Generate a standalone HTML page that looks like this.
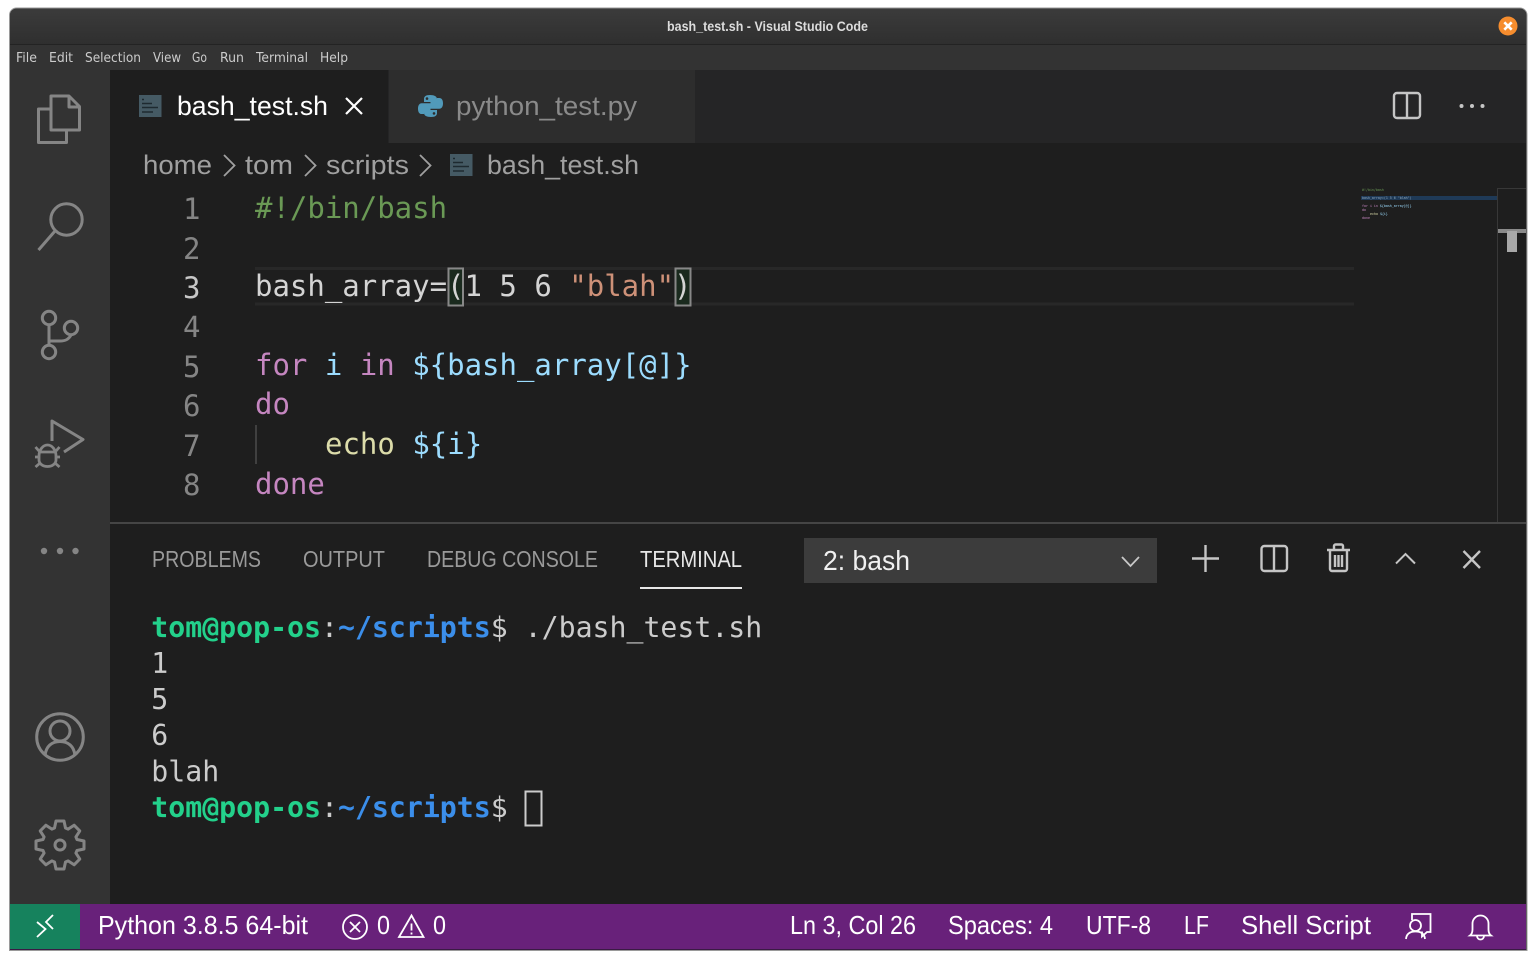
<!DOCTYPE html>
<html><head><meta charset="utf-8"><title>bash_test.sh - Visual Studio Code</title>
<style>
html,body{margin:0;padding:0;background:#fff;width:1536px;height:960px;overflow:hidden}
svg{display:block}
.u{font-family:"Liberation Sans",sans-serif}
.d{font-family:"DejaVu Sans",sans-serif}
.m{font-family:"DejaVu Sans Mono","Liberation Mono",monospace;white-space:pre}
.ic{fill:none;stroke:#858585;stroke-width:3}
.pi{fill:none;stroke:#c5c5c5;stroke-width:2.4}
.wi{fill:none;stroke:#fff;stroke-width:1.8}
</style></head><body>
<svg width="1536" height="960" viewBox="0 0 1536 960" xmlns="http://www.w3.org/2000/svg">
<defs><linearGradient id="t" x1="0" y1="0" x2="0" y2="1"><stop offset="0" stop-color="#3b3b3b"/><stop offset="1" stop-color="#2f2f2f"/></linearGradient></defs>
<rect width="1536" height="960" fill="#fff"/>
<path d="M9.500 950.500V15a7 7 0 0 1 7-7H1520a7 7 0 0 1 7 7V950.500Z" fill="#333" stroke="#9a9a9a" stroke-width="1"/>
<path d="M10 44V15a6 6 0 0 1 6-6H1520a6 6 0 0 1 6 6V44Z" fill="url(#t)"/>
<rect x="10" y="44" width="1516" height="1" fill="#232323"/>
<rect x="10" y="45" width="1516" height="25" fill="#333"/>
<rect x="110" y="70" width="1416" height="834" fill="#1e1e1e"/>
<rect x="388" y="70" width="1138" height="73" fill="#252526"/>
<rect x="389" y="70" width="306" height="73" fill="#2d2d2d"/>

<text class="u" x="667" y="31" font-size="14" font-weight="700" fill="#dcdcdc" textLength="201" lengthAdjust="spacingAndGlyphs">bash_test.sh - Visual Studio Code</text>
<circle cx="1508" cy="26" r="9.500" fill="#f68d2e"/>
<path d="M1504.300 22.300l7.400 7.400m0-7.400l-7.400 7.400" stroke="#fff" stroke-width="2.600"/>

<g class="d" font-size="13" fill="#cccccc">
<text x="16" y="62" textLength="21" lengthAdjust="spacingAndGlyphs">File</text>
<text x="49" y="62" textLength="24" lengthAdjust="spacingAndGlyphs">Edit</text>
<text x="85" y="62" textLength="56" lengthAdjust="spacingAndGlyphs">Selection</text>
<text x="153" y="62" textLength="28" lengthAdjust="spacingAndGlyphs">View</text>
<text x="192" y="62" textLength="15" lengthAdjust="spacingAndGlyphs">Go</text>
<text x="220" y="62" textLength="24" lengthAdjust="spacingAndGlyphs">Run</text>
<text x="256" y="62" textLength="52" lengthAdjust="spacingAndGlyphs">Terminal</text>
<text x="320" y="62" textLength="28" lengthAdjust="spacingAndGlyphs">Help</text>
</g>

<!-- activity bar -->
<g class="ic" stroke-linejoin="round">
<path d="M51 109H38.500v33.500H66.500V130"/>
<path d="M51 96H69L79.500 106.500V130H51Z"/>
<path d="M69 96V107H79.500"/>
<circle cx="66.500" cy="219.500" r="15.700"/>
<path d="M55 231L38.500 250"/>
<circle cx="49" cy="318" r="6.700"/>
<circle cx="71" cy="328" r="6.700"/>
<circle cx="49" cy="352" r="6.700"/>
<path d="M49 325V345M49 341H60C66 341 69 339 71 335"/>
<path d="M52 441V421L83 439.500L64 452"/>
<path d="M39 456a8.500 11 0 0 1 17 0v4a8.500 6.500 0 0 1-17 0zM39 452H56M35.500 447l3.500 4M59.500 447l-3.500 4M35 457H39M56 457H60M35.500 467l4-3.500M59.500 467l-4-3.500" stroke-width="2.800"/>
<circle cx="60" cy="737" r="23.300"/>
<circle cx="60" cy="731" r="10"/>
<path d="M45 755.500C46 746 52 741.500 60 741.500S74 746 75 755.500"/>
<circle cx="60" cy="845" r="5"/>
<path d="M54.500 828L56 821H64L65.500 828L68.100 829.100L74.100 825.200L79.800 830.900L75.900 836.900L77 839.500L84 841V849L77 850.500L75.900 853.100L79.800 859.100L74.100 864.800L68.100 860.900L65.500 862L64 869H56L54.500 862L51.900 860.900L45.900 864.800L40.200 859.100L44.100 853.100L43 850.500L36 849V841L43 839.500L44.100 836.900L40.200 830.900L45.900 825.200L51.900 829.100Z"/>
</g>
<g fill="#858585"><circle cx="44" cy="551" r="3.200"/><circle cx="60" cy="551" r="3.200"/><circle cx="75.500" cy="551" r="3.200"/></g>

<!-- tabs -->
<rect x="139" y="95" width="22.500" height="22" fill="#455a64"/>
<path d="M142 99.500h2M142 103.500h10M142 107.500h16M142 112h11" stroke="#1e2a30" stroke-width="1.400"/>
<text class="u" x="177" y="115" font-size="27" fill="#fff" textLength="151" lengthAdjust="spacingAndGlyphs">bash_test.sh</text>
<path d="M346 98l16 16m0-16l-16 16" stroke="#fff" stroke-width="2.200" fill="none"/>
<g fill="#519aba">
<path d="M430 95c-4.500 0-6 1.700-6 4v3h6.500v1.200h-8.800c-2.300 0-3.700 2-3.700 5.500s1.400 5.300 3.700 5.300h2.300v-3.500c0-2.300 1.700-4 4-4h6c1.700 0 3-1.400 3-3V99c0-2.500-2.500-4-7-4zm-3 2.300a1.300 1.300 0 1 1 0 2.600 1.300 1.300 0 0 1 0-2.600z"/>
<path d="M431 117c4.500 0 6-1.700 6-4v-3h-6.500v-1.200h8.800c2.300 0 3.700-2 3.700-5.500s-1.400-5.300-3.700-5.300H437v3.500c0 2.300-1.700 4-4 4h-6c-1.700 0-3 1.400-3 3v4.500c0 2.500 2.500 4 7 4zm3-2.300a1.300 1.300 0 1 1 0-2.600 1.300 1.300 0 0 1 0 2.600z"/>
</g>
<text class="u" x="456" y="115" font-size="27" fill="#8a8a8a" textLength="181" lengthAdjust="spacingAndGlyphs">python_test.py</text>
<rect x="1394" y="93" width="26" height="25" rx="3" class="pi"/><path d="M1407 93v25" class="pi"/>
<g fill="#c5c5c5"><circle cx="1461.500" cy="106" r="2"/><circle cx="1472" cy="106" r="2"/><circle cx="1482.500" cy="106" r="2"/></g>

<!-- breadcrumb -->
<g class="u" font-size="27" fill="#a0a0a0">
<text x="143" y="174" textLength="69" lengthAdjust="spacingAndGlyphs">home</text>
<text x="245" y="174" textLength="48" lengthAdjust="spacingAndGlyphs">tom</text>
<text x="326" y="174" textLength="83" lengthAdjust="spacingAndGlyphs">scripts</text>
<text x="487" y="174" textLength="152" lengthAdjust="spacingAndGlyphs">bash_test.sh</text>
</g>
<g fill="none" stroke="#a0a0a0" stroke-width="1.800"><path d="M224 155l10.500 10.500L224 176"/><path d="M305 155l10.500 10.500L305 176"/><path d="M420 155l10.500 10.500L420 176"/></g>
<rect x="450" y="154" width="22.500" height="22" fill="#455a64"/>
<path d="M453 158.500h2M453 162.500h10M453 166.500h16M453 171h11" stroke="#1e2a30" stroke-width="1.400"/>

<!-- current line -->
<path d="M255 268.500H1354M255 304H1354" stroke="#282828" stroke-width="3"/>
<rect x="448.500" y="268.500" width="14.500" height="37" fill="#1a2a1e" stroke="#888" stroke-width="2"/>
<rect x="675.500" y="268.500" width="15" height="37" fill="#1a2a1e" stroke="#888" stroke-width="2"/>
<path d="M256 425v39" stroke="#404040" stroke-width="2"/>

<!-- line numbers -->
<g class="m" font-size="29" fill="#858585">
<text x="183" y="219">1</text><text x="183" y="259">2</text>
<text x="183" y="298" fill="#c6c6c6">3</text>
<text x="183" y="337">4</text><text x="183" y="377">5</text><text x="183" y="416">6</text><text x="183" y="456">7</text><text x="183" y="495">8</text>
</g>
<!-- code -->
<g class="m" font-size="29">
<text x="255" y="218" fill="#6a9955">#!/bin/bash</text>
<text x="255" y="296" fill="#d4d4d4">bash_array=(1 5 6 <tspan fill="#ce9178">"blah"</tspan>)</text>
<text x="255" y="375"><tspan fill="#c586c0">for</tspan> <tspan fill="#9cdcfe">i</tspan> <tspan fill="#c586c0">in</tspan> <tspan fill="#9cdcfe">${bash_array[@]}</tspan></text>
<text x="255" y="414" fill="#c586c0">do</text>
<text x="325" y="454"><tspan fill="#dcdcaa">echo</tspan> <tspan fill="#9cdcfe">${i}</tspan></text>
<text x="255" y="494" fill="#c586c0">done</text>
</g>

<!-- minimap -->
<g font-family="'DejaVu Sans Mono',monospace" font-size="3.300">
<rect x="1361" y="196" width="136" height="4" fill="#1f3a57"/>
<text x="1362" y="191" fill="#6a9955">#!/bin/bash</text>
<text x="1362" y="199" fill="#8fa8bc">bash_array=(1 5 6 "blah")</text>
<text x="1362" y="207"><tspan fill="#c586c0">for i in </tspan><tspan fill="#9cdcfe">${bash_array[@]}</tspan></text>
<text x="1362" y="211" fill="#c586c0">do</text>
<text x="1370" y="215"><tspan fill="#dcdcaa">echo</tspan> <tspan fill="#9cdcfe">${i}</tspan></text>
<text x="1362" y="219" fill="#c586c0">done</text>
</g>
<path d="M1497.500 522V188.500H1526" fill="none" stroke="#383838"/>
<rect x="1498" y="229" width="28" height="4" fill="#8a8a8a"/>
<rect x="1507" y="231" width="10" height="21" fill="#a8a8a8"/>

<!-- panel -->
<rect x="110" y="522" width="1416" height="2" fill="#454545"/>
<g class="u" font-size="23" fill="#9a9a9a">
<text x="152" y="567" textLength="109" lengthAdjust="spacingAndGlyphs">PROBLEMS</text>
<text x="303" y="567" textLength="82" lengthAdjust="spacingAndGlyphs">OUTPUT</text>
<text x="427" y="567" textLength="171" lengthAdjust="spacingAndGlyphs">DEBUG CONSOLE</text>
<text x="640" y="567" textLength="102" lengthAdjust="spacingAndGlyphs" fill="#e7e7e7">TERMINAL</text>
</g>
<rect x="640" y="587" width="102" height="2" fill="#e7e7e7"/>
<rect x="804" y="538" width="353" height="45" fill="#3c3c3c"/>
<text class="u" x="823" y="570" font-size="28" fill="#f0f0f0" textLength="87" lengthAdjust="spacingAndGlyphs">2: bash</text>
<path d="M1122 557l8.500 9 8.500-9" fill="none" stroke="#c8c8c8" stroke-width="1.800"/>
<g class="pi">
<path d="M1192 558.500h27M1205.500 545v27"/>
<rect x="1261.500" y="546" width="25.500" height="25" rx="3"/><path d="M1274 546v25"/>
<path d="M1327 550h23M1334 549.500v-3.500a1.500 1.500 0 0 1 1.500-1.500h6a1.500 1.500 0 0 1 1.500 1.500v3.500M1330 550v19a2 2 0 0 0 2 2h13a2 2 0 0 0 2-2v-19M1335 555v12M1338.500 555v12M1342 555v12"/>
<path d="M1396 563.500l9.500-9.500 9.500 9.500" stroke-width="2"/>
<path d="M1463.500 551l16.500 17m0-17l-16.500 17"/>
</g>

<!-- terminal -->
<g class="m" font-size="28.200">
<text x="151.300" y="637"><tspan fill="#23d18b" font-weight="700">tom@pop-os</tspan><tspan fill="#cccccc">:</tspan><tspan fill="#3b8eea" font-weight="700">~/scripts</tspan><tspan fill="#cccccc">$ ./bash_test.sh</tspan></text>
<text x="151.300" y="673" fill="#cccccc">1</text>
<text x="151.300" y="709" fill="#cccccc">5</text>
<text x="151.300" y="745" fill="#cccccc">6</text>
<text x="151.300" y="781" fill="#cccccc">blah</text>
<text x="151.300" y="817"><tspan fill="#23d18b" font-weight="700">tom@pop-os</tspan><tspan fill="#cccccc">:</tspan><tspan fill="#3b8eea" font-weight="700">~/scripts</tspan><tspan fill="#cccccc">$</tspan></text>
</g>
<rect x="525.500" y="791.500" width="16" height="34" fill="none" stroke="#cccccc" stroke-width="2"/>

<!-- status -->
<rect x="10" y="904" width="1516" height="45.500" fill="#68217a"/>
<rect x="10" y="904" width="70" height="45.500" fill="#16825d"/>
<rect x="10" y="949" width="1516" height="1" fill="#3a1a44"/>
<path d="M37 922l8.500 7-8.500 8M53 915l-7 7 7 7" fill="none" stroke="#fff" stroke-width="1.800"/>
<g class="u" font-size="26" fill="#fff">
<text x="98" y="934" textLength="210" lengthAdjust="spacingAndGlyphs">Python 3.8.5 64-bit</text>
<text x="377" y="934" textLength="13" lengthAdjust="spacingAndGlyphs">0</text>
<text x="433" y="934" textLength="13" lengthAdjust="spacingAndGlyphs">0</text>
<text x="790" y="934" textLength="126" lengthAdjust="spacingAndGlyphs">Ln 3, Col 26</text>
<text x="948" y="934" textLength="105" lengthAdjust="spacingAndGlyphs">Spaces: 4</text>
<text x="1086" y="934" textLength="65" lengthAdjust="spacingAndGlyphs">UTF-8</text>
<text x="1184" y="934" textLength="25" lengthAdjust="spacingAndGlyphs">LF</text>
<text x="1241" y="934" textLength="130" lengthAdjust="spacingAndGlyphs">Shell Script</text>
</g>
<g class="wi">
<circle cx="355" cy="927" r="12"/>
<path d="M350 922l10 10m0-10l-10 10"/>
<path d="M411.500 915.500l12 21.500h-24.500Z"/>
<path d="M411.500 923.500v7M411.500 932.500v2"/>
<path d="M1412 920v-6h18.500v18h-3.500l-5 4.500v-5"/>
<circle cx="1415.500" cy="925.500" r="5.500"/>
<path d="M1406 939c.5-5.500 4-7.500 9.500-7.500s9 2 9.500 7.500"/>
<path d="M1470 935.500c2-1.500 2.500-3.500 2.500-6v-6a8 8 0 0 1 16 0v6c0 2.500 .5 4.500 2.500 6zM1477 936a3.500 3.500 0 0 0 7 0"/>
</g>
</svg>
</body></html>
